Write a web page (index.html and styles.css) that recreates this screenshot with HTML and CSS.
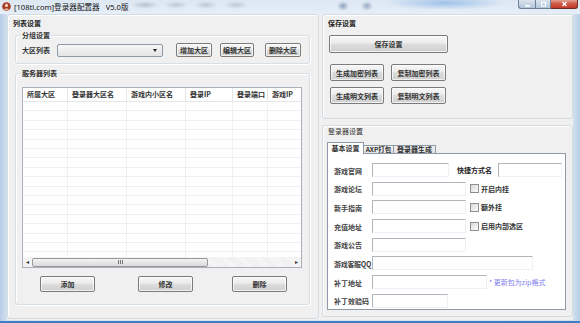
FILE: index.html
```html
<!DOCTYPE html>
<html lang="zh-CN">
<head>
<meta charset="utf-8">
<title>[108tl.com]登录器配置器 V5.0版</title>
<link rel="stylesheet" href="styles.css">
</head>
<body>
<div class="window">
  <div class="titlebar">
    <svg class="app-icon" width="9" height="9" viewBox="0 0 9 9">
      <circle cx="4.5" cy="4.5" r="4.3" fill="#a63a26"/>
      <circle cx="4.5" cy="3.4" r="1.6" fill="#f1d2b8"/>
      <path d="M1.8 8 Q4.5 4.6 7.2 8 Z" fill="#e8c19c"/>
    </svg>
    <span class="title">[108tl.com]登录器配置器</span>
    <span class="version">V5.0版</span>
    <div class="caps">
      <span class="cap cap-min"><svg width="7" height="5" viewBox="0 0 7 5"><rect x="1" y="3" width="5" height="1.6" fill="#fff"/></svg></span>
      <span class="cap cap-max"><svg width="7" height="5" viewBox="0 0 7 5"><rect x="1.5" y="0.5" width="4" height="3.6" fill="none" stroke="#fff" stroke-width="1"/></svg></span>
      <span class="cap cap-close"><svg width="7" height="6" viewBox="0 0 7 6"><path d="M1.5 1 L5.5 5 M5.5 1 L1.5 5" stroke="#fff" stroke-width="1.4"/></svg></span>
    </div>
  </div>

  <div class="client">
    <section class="panel left-panel">
      <div class="panel-title bold">列表设置</div>

      <div class="group group-zone">
        <span class="group-title">分组设置</span>
        <div class="zone-row">
          <span class="zone-lbl">大区列表</span>
          <div class="combo"><span class="combo-arrow"></span></div>
          <button class="btn btn-zone-add">增加大区</button>
          <button class="btn btn-zone-edit">编辑大区</button>
          <button class="btn btn-zone-del">删除大区</button>
        </div>
      </div>

      <div class="group group-servers">
        <span class="group-title">服务器列表</span>
        <div class="listview">
          <div class="lv-head">
            <span class="lv-cell c1">所属大区</span>
            <span class="lv-cell c2">登录器大区名</span>
            <span class="lv-cell c3">游戏内小区名</span>
            <span class="lv-cell c4">登录IP</span>
            <span class="lv-cell c5">登录端口</span>
            <span class="lv-cell c6">游戏IP</span>
          </div>
          <div class="lv-body">
            <span class="lv-col c1"></span>
            <span class="lv-col c2"></span>
            <span class="lv-col c3"></span>
            <span class="lv-col c4"></span>
            <span class="lv-col c5"></span>
            <span class="lv-col c6"></span>
          </div>
          <div class="hscroll">
            <span class="sb-arrow">◂</span>
            <span class="sb-thumb"><span class="grip"></span></span>
            <span class="sb-arrow sb-right">▸</span>
          </div>
        </div>
        <div class="list-actions">
          <button class="btn btn-act btn-add">添加</button>
          <button class="btn btn-act btn-mod">修改</button>
          <button class="btn btn-act btn-del">删除</button>
        </div>
      </div>
    </section>

    <div class="right-col">
      <section class="panel save-panel">
        <div class="panel-title bold">保存设置</div>
        <button class="btn btn-save">保存设置</button>
        <div class="save-row">
          <button class="btn btn-list">生成加密列表</button>
          <button class="btn btn-list btn-wide">复制加密列表</button>
        </div>
        <div class="save-row save-row-2">
          <button class="btn btn-list">生成明文列表</button>
          <button class="btn btn-list btn-wide">复制明文列表</button>
        </div>
      </section>

      <section class="panel launcher-panel">
        <div class="panel-title launcher-title">登录器设置</div>
        <div class="tabs">
          <span class="tab tab-active">基本设置</span>
          <span class="tab tab-axp">AXP打包</span>
          <span class="tab tab-gen">登录器生成</span>
        </div>
        <div class="tab-page">
          <div class="field-row">
            <span class="f-lbl">游戏官网</span>
            <span class="field w77"></span>
            <span class="shortcut-lbl bold">快捷方式名</span>
            <span class="field w64 shortcut-field"></span>
          </div>
          <div class="field-row">
            <span class="f-lbl">游戏论坛</span>
            <span class="field w94"></span>
            <span class="chk"></span><span class="chk-lbl">开启内挂</span>
          </div>
          <div class="field-row">
            <span class="f-lbl">新手指南</span>
            <span class="field w94"></span>
            <span class="chk"></span><span class="chk-lbl">额外挂</span>
          </div>
          <div class="field-row">
            <span class="f-lbl">充值地址</span>
            <span class="field w94"></span>
            <span class="chk"></span><span class="chk-lbl">启用内部选区</span>
          </div>
          <div class="field-row">
            <span class="f-lbl">游戏公告</span>
            <span class="field w94"></span>
          </div>
          <div class="field-row">
            <span class="f-lbl f-lbl-tight">游戏客服QQ</span>
            <span class="field w161"></span>
          </div>
          <div class="field-row">
            <span class="f-lbl">补丁地址</span>
            <span class="field w115"></span>
            <span class="note">* 更新包为zip格式</span>
          </div>
          <div class="field-row">
            <span class="f-lbl">补丁效验码</span>
            <span class="field w76"></span>
          </div>
        </div>
      </section>
    </div>
  </div>
</div>
</body>
</html>
```
FILE: styles.css
```css
* { box-sizing: border-box; }
html, body { margin: 0; padding: 0; }
body {
  width: 580px;
  height: 323px;
  overflow: hidden;
  background: #3f7cc4;
  font-family: "Noto Sans CJK SC", "Noto Sans", sans-serif;
  font-size: 7px;
  line-height: 8px;
  color: #222;
}
.bold { font-weight: 700; }

.window {
  height: 321px;
  background: linear-gradient(to right, #b7cde6 0, #d3e1f0 7px, #dbe6f2 50%, #d3e1f0 573px, #b7cde6 580px);
  display: flex;
  flex-direction: column;
}

/* title bar */
.titlebar {
  height: 14px;
  display: flex;
  align-items: flex-start;
  background:
    radial-gradient(ellipse 14px 4px at 145px 5px, rgba(110,120,140,.35), transparent),
    radial-gradient(ellipse 12px 4px at 176px 5px, rgba(110,120,140,.3), transparent),
    radial-gradient(ellipse 12px 4px at 206px 5px, rgba(110,120,140,.3), transparent),
    radial-gradient(ellipse 12px 4px at 236px 5px, rgba(110,120,140,.3), transparent),
    radial-gradient(ellipse 6px 5px at 343px 6px, rgba(40,70,120,.45), transparent),
    radial-gradient(ellipse 6px 5px at 367px 6px, rgba(40,70,120,.4), transparent),
    radial-gradient(ellipse 60px 7px at 445px 3px, rgba(80,145,220,.45), transparent),
    linear-gradient(#dde7f3, #e6eef7);
}
.app-icon { margin: 2px 0 0 2px; flex: none; }
.title {
  margin-left: 3px;
  line-height: 14px;
  font-family: "Noto Sans", "Noto Sans CJK SC", sans-serif;
  font-size: 7.6px;
  color: #111;
}
.version {
  margin-left: 6px;
  line-height: 14px;
  font-family: "Noto Sans", "Noto Sans CJK SC", sans-serif;
  font-size: 7.6px;
  color: #111;
}
.caps { margin-left: auto; margin-right: 2px; display: flex; }
.cap {
  height: 9px;
  display: flex;
  align-items: center;
  justify-content: center;
  border: 1px solid #6c7f96;
  border-top: none;
  background: linear-gradient(#dbe4ef, #b3c5da);
}
.cap-min { width: 17px; border-radius: 0 0 0 3px; border-right: none; }
.cap-max { width: 16px; }
.cap-close {
  width: 27px;
  border-radius: 0 0 3px 0;
  border-color: #6b2d26;
  border-left: none;
  background: linear-gradient(#e3a296, #cf5a48 45%, #c23a2b);
}

/* client */
.client {
  display: flex;
  gap: 3px;
  margin-left: 7px;
  width: 566px;
  height: 306px;
  background: #f0f0f0;
}
.panel {
  border: 1px solid #d3dbe3;
  border-radius: 3px;
  background: #f0f0f0;
  box-shadow: inset 1px 1px 0 #fff;
}
.panel-title { height: 8px; line-height: 8px; margin: 4px 0 0 5px; }

.left-panel { width: 312px; height: 305px; }

.group {
  position: relative;
  border: 1px solid #d5dfe5;
  border-radius: 3px;
  box-shadow: inset 1px 1px 0 #fff, 1px 1px 0 #fff;
}
.group-title {
  position: absolute;
  top: -5px;
  left: 5px;
  padding: 0 1px;
  line-height: 8px;
  background: #f0f0f0;
  font-weight: 700;
  color: #333;
}
.group-zone { margin: 8px 0 0 7px; width: 295px; height: 29px; padding: 7px 0 0 6px; }
.zone-row { display: flex; align-items: center; height: 14px; }
.zone-lbl { width: 30px; font-weight: 700; color: #333; }
.combo {
  width: 106px;
  height: 13px;
  margin-left: 5px;
  border: 1px solid #8f9aa6;
  border-radius: 2px;
  background: linear-gradient(#f7f7f7, #e4e4e4);
  display: flex;
  align-items: center;
  justify-content: flex-end;
  padding-right: 5px;
}
.combo-arrow {
  width: 0; height: 0;
  border-left: 2.5px solid transparent;
  border-right: 2.5px solid transparent;
  border-top: 3px solid #222;
}

.btn {
  font: inherit;
  font-weight: 700;
  color: #333;
  padding: 0;
  line-height: 8px;
  white-space: nowrap;
  border: 1px solid #7b7b7b;
  border-radius: 2px;
  background: linear-gradient(#f7f7f7 0%, #ebebeb 45%, #dddddd 50%, #cfcfcf 100%);
  box-shadow: inset 0 0 0 1px rgba(255,255,255,.7);
  flex: none;
}
.btn-zone-add { margin-left: 13px; width: 36px; height: 14px; }
.btn-zone-edit { margin-left: 8px; width: 34px; height: 14px; }
.btn-zone-del { margin-left: 11px; width: 36px; height: 14px; }

.group-servers { margin: 9px 0 0 7px; width: 295px; height: 232px; padding: 13px 0 0 6px; }
.listview {
  width: 280px;
  height: 181px;
  border: 1px solid #a9b1ba;
  background: #fff;
  display: flex;
  flex-direction: column;
}
.lv-head { display: flex; height: 14px; border-bottom: 1px solid #e6e6e6; flex: none; }
.lv-cell {
  line-height: 13px;
  padding-left: 4px;
  border-right: 1px solid #e6e6e6;
  white-space: nowrap;
  overflow: hidden;
  font-weight: 700;
  color: #333;
}
.c1 { width: 45px; }
.c2 { width: 59px; }
.c3 { width: 59px; }
.c4 { width: 47px; }
.c5 { width: 35px; }
.c6 { width: 33px; border-right: none; }
.lv-body {
  flex: 1;
  display: flex;
  background: repeating-linear-gradient(to bottom, #fff 0, #fff 8.4px, #efefef 8.4px, #efefef 9.4px);
}
.lv-col { border-right: 1px solid #f0f0f0; }
.lv-col.c6 { border-right: none; }
.hscroll {
  height: 10px;
  flex: none;
  display: flex;
  align-items: center;
  background: repeating-linear-gradient(45deg, #eeeeee 0, #eeeeee 1px, #f8f8f8 1px, #f8f8f8 2px);
}
.sb-arrow { width: 9px; font-size: 6px; line-height: 10px; text-align: center; color: #333; }
.sb-right { margin-left: auto; }
.sb-thumb {
  width: 176px;
  height: 9px;
  border: 1px solid #999;
  border-radius: 2px;
  background: linear-gradient(#f3f3f3, #dadada);
  display: flex;
  align-items: center;
  justify-content: center;
}
.grip {
  width: 5px; height: 4px;
  background: repeating-linear-gradient(to right, #777 0, #777 1px, transparent 1px, transparent 2px);
}
.list-actions { display: flex; margin-top: 8px; height: 16px; }
.btn-act { width: 55px; height: 16px; }
.btn-add { margin-left: 18px; }
.btn-mod { margin-left: 43px; }
.btn-del { margin-left: 39px; }

/* right column */
.right-col { width: 251px; display: flex; flex-direction: column; }
.save-panel { height: 105px; }
.btn-save { display: block; margin: 8px 0 0 6px; width: 119px; height: 18px; }
.save-row { display: flex; gap: 7px; margin: 11px 0 0 7px; }
.save-row-2 { margin-top: 6px; }
.btn-list { width: 54px; height: 17px; }
.btn-list.btn-wide { width: 55px; }

.launcher-panel { margin-top: 6px; height: 192px; }
.launcher-title { margin-top: 1px; color: #333; }
.tabs { display: flex; align-items: flex-end; height: 11px; margin: 7px 0 0 4px; }
.tab {
  height: 8px;
  line-height: 7px;
  border: 1px solid #8e9aa8;
  border-bottom: none;
  background: linear-gradient(#f3f3f3, #e2e2e2);
  text-align: center;
  font-weight: 700;
  color: #333;
  white-space: nowrap;
  overflow: hidden;
}
.tab-active {
  position: relative;
  z-index: 1;
  width: 37px;
  height: 12px;
  margin-bottom: -1px;
  line-height: 10px;
  background: #fff;
}
.tab-axp { width: 30px; border-left: none; font-size: 6.5px; }
.tab-gen { width: 42px; border-left: none; }
.tab-page {
  margin-left: 4px;
  width: 239px;
  height: 157px;
  border: 1px solid #8e9aa8;
  background: #fff;
  padding: 9px 0 0 6px;
  display: flex;
  flex-direction: column;
  gap: 4.7px;
}
.field-row { display: flex; align-items: center; height: 14px; }
.f-lbl { width: 38px; white-space: nowrap; padding-top: 1px; font-weight: 700; color: #444; }
.f-lbl-tight { letter-spacing: -0.3px; }
.field {
  height: 14px;
  border: 1px solid;
  border-color: #b2b6bc #eef1f4 #eef1f4 #b2b6bc;
  background: #fff;
  flex: none;
}
.w77 { width: 77px; }
.w64 { width: 64px; }
.w94 { width: 94px; }
.w161 { width: 161px; }
.w115 { width: 115px; }
.w76 { width: 76px; }
.shortcut-lbl { margin-left: 8px; width: 37px; white-space: nowrap; color: #222; }
.shortcut-field { margin-left: 4px; }
.chk {
  width: 9px;
  height: 9px;
  margin-left: 4px;
  border: 1px solid #8e8f8f;
  background: linear-gradient(135deg, #d9d9d9, #fbfbfb);
  flex: none;
}
.chk-lbl { margin-left: 2px; font-weight: 700; color: #333; }
.note { margin-left: 2px; color: #7f80ee; white-space: nowrap; }
```
